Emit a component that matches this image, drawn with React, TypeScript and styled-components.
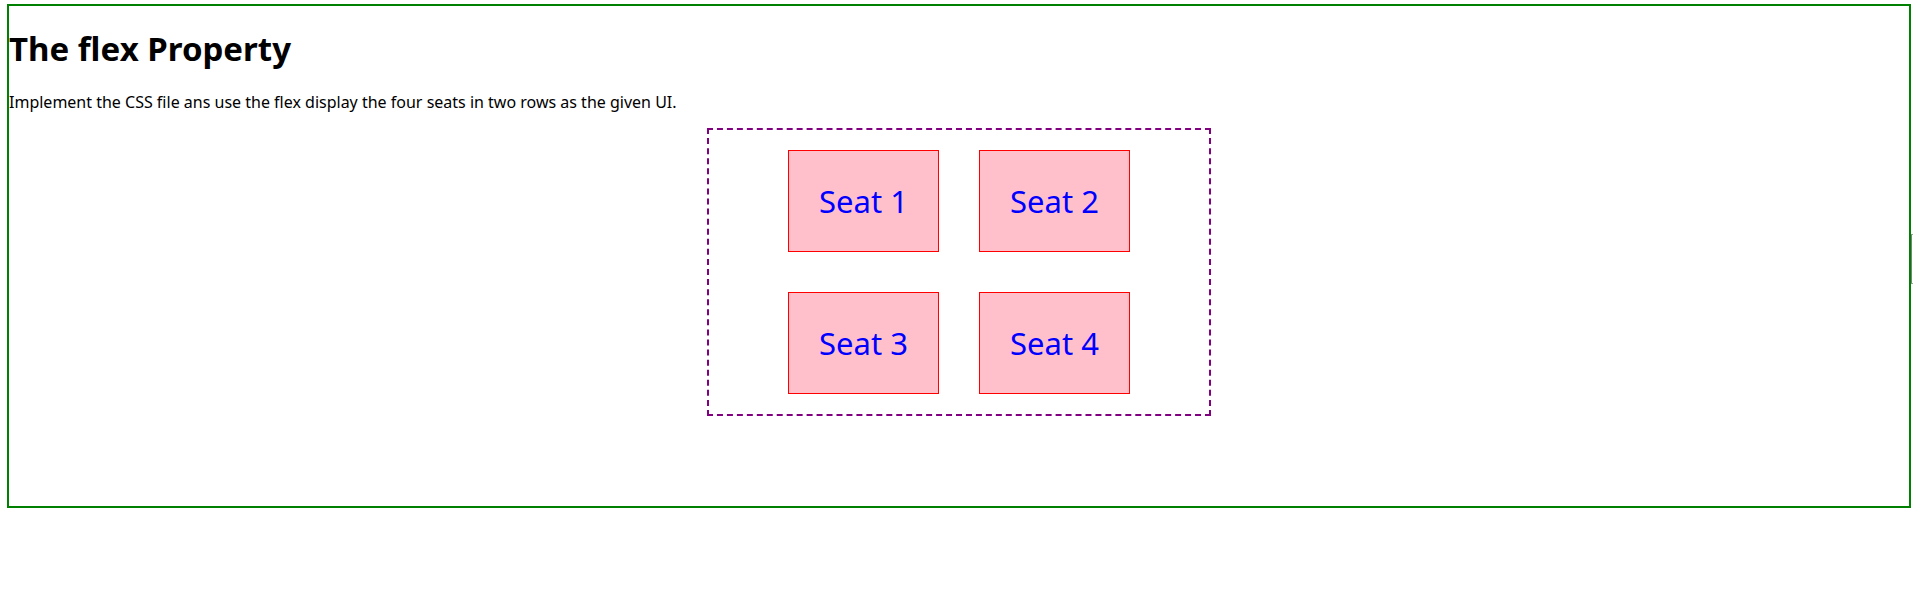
import styled, { createGlobalStyle } from "styled-components";

const GlobalStyle = createGlobalStyle`
  body {
    margin: 4px 2px 0 7px;
    background: #fff;
    color: #000;
    font-family: "Noto Sans", "Open Sans", sans-serif;
    font-size: 16px;
    line-height: 21px;
  }
`;

const Page = styled.main`
  min-height: 500px;
  border: 2px solid green;
`;

const Title = styled.h1`
  margin: 22px 0;
  font-size: 33px;
  line-height: 42px;
`;

const Intro = styled.p`
  margin: 0 0 15px;
`;

const SeatPlan = styled.section`
  display: flex;
  flex-wrap: wrap;
  justify-content: center;
  gap: 40px;
  max-width: 460px;
  margin: 0 auto;
  padding: 20px;
  border: 2px dashed purple;
`;

const Seat = styled.div`
  box-sizing: border-box;
  width: 151px;
  padding: 30px 0;
  border: 1px solid red;
  background: pink;
  color: blue;
  font-size: 31px;
  line-height: 40px;
  text-align: center;
`;

const EdgeHandle = styled.div`
  position: fixed;
  top: 234px;
  right: 0;
  box-sizing: border-box;
  width: 2px;
  height: 50px;
  border: 1px solid #a0a0a0;
  border-left-color: #808080;
  border-right: 0;
`;

const seats = [1, 2, 3, 4];

export default function App() {
  return (
    <>
      <GlobalStyle />
      <Page>
        <Title>The flex Property</Title>
        <Intro>
          Implement the CSS file ans use the flex display the four seats in two
          rows as the given UI.
        </Intro>
        <SeatPlan>
          {seats.map((n) => (
            <Seat key={n}>Seat {n}</Seat>
          ))}
        </SeatPlan>
      </Page>
      <EdgeHandle />
    </>
  );
}
